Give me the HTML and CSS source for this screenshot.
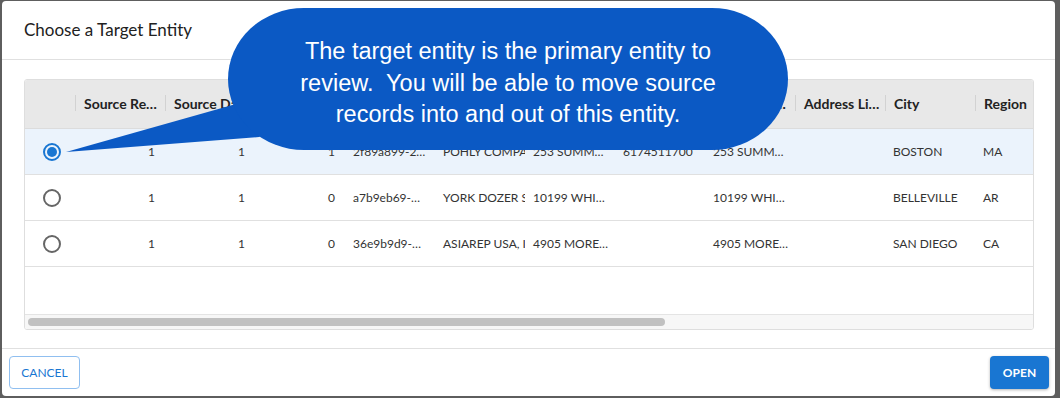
FILE: index.html
```html
<!DOCTYPE html>
<html lang="en">
<head>
    <meta charset="UTF-8">
    <title>Choose a Target Entity</title>
    <link rel="stylesheet" href="styles.css">
</head>
<body>
    <div class="dialog">
        <div class="dialog-header">
            <h2>Choose a Target Entity</h2>
        </div>

        <div class="dialog-content">
            <div class="grid">
                <div class="grid-body">
                    <div class="row header-row">
                        <div class="hcell first"></div>
                        <div class="hcell"><span>Source Re…</span></div>
                        <div class="hcell"><span>Source Da…</span></div>
                        <div class="hcell"><span>Ambiguous</span></div>
                        <div class="hcell"><span>Entity ID</span></div>
                        <div class="hcell"><span>Name</span></div>
                        <div class="hcell"><span>Address</span></div>
                        <div class="hcell"><span>Phone</span></div>
                        <div class="hcell"><span>Address L…</span></div>
                        <div class="hcell"><span>Address Li…</span></div>
                        <div class="hcell"><span>City</span></div>
                        <div class="hcell"><span>Region</span></div>
                        <div class="hcell"><span>Postal Code</span></div>
                    </div>

                    <div class="row selected">
                        <div class="cell radio-cell"><span class="radio checked"></span></div>
                        <div class="cell num">1</div>
                        <div class="cell num">1</div>
                        <div class="cell num">1</div>
                        <div class="cell">2f89a899-2…</div>
                        <div class="cell clip">POHLY COMPANY</div>
                        <div class="cell">253 SUMM…</div>
                        <div class="cell">6174511700</div>
                        <div class="cell">253 SUMM…</div>
                        <div class="cell"></div>
                        <div class="cell">BOSTON</div>
                        <div class="cell">MA</div>
                        <div class="cell">02210</div>
                    </div>

                    <div class="row">
                        <div class="cell radio-cell"><span class="radio"></span></div>
                        <div class="cell num">1</div>
                        <div class="cell num">1</div>
                        <div class="cell num">0</div>
                        <div class="cell">a7b9eb69-…</div>
                        <div class="cell clip">YORK DOZER SERVICE</div>
                        <div class="cell">10199 WHI…</div>
                        <div class="cell"></div>
                        <div class="cell">10199 WHI…</div>
                        <div class="cell"></div>
                        <div class="cell">BELLEVILLE</div>
                        <div class="cell">AR</div>
                        <div class="cell">72824</div>
                    </div>

                    <div class="row">
                        <div class="cell radio-cell"><span class="radio"></span></div>
                        <div class="cell num">1</div>
                        <div class="cell num">1</div>
                        <div class="cell num">0</div>
                        <div class="cell">36e9b9d9-…</div>
                        <div class="cell clip">ASIAREP USA, INC.</div>
                        <div class="cell">4905 MORE…</div>
                        <div class="cell"></div>
                        <div class="cell">4905 MORE…</div>
                        <div class="cell"></div>
                        <div class="cell">SAN DIEGO</div>
                        <div class="cell">CA</div>
                        <div class="cell">92121</div>
                    </div>
                </div>

                <div class="hscroll">
                    <div class="thumb"></div>
                </div>
            </div>
        </div>

        <div class="dialog-footer">
            <button class="btn btn-outline">CANCEL</button>
            <button class="btn btn-primary">OPEN</button>
        </div>
    </div>

    <!-- help callout over the dialog -->
    <svg class="callout-tail" width="320" height="170" viewBox="0 0 320 170">
        <polygon points="66,152 236,104 300,118 259,137" fill="#0b59c4"/>
    </svg>
    <div class="callout">
        <p>The target entity is the primary entity to<br>review.&nbsp; You will be able to move source<br>records into and out of this entity.</p>
    </div>
</body>
</html>
```

FILE: styles.css
```css
body {
    margin: 0;
    background-color: #5e5e5e;
    font-family: 'Lato', 'Liberation Sans', sans-serif;
    color: #222;
}

.dialog {
    position: relative;
    margin: 1px 0 0 2px;
    width: 1053px;
    height: 395px;
    background-color: #fff;
    border-radius: 4px;
    display: flex;
    flex-direction: column;
    overflow: hidden;
}

.dialog-header {
    height: 58px;
    border-bottom: 1px solid #e0e0e0;
    display: flex;
    align-items: center;
    padding-left: 22px;
    flex: none;
}

.dialog-header h2 {
    margin: 0 0 2px 0;
    font-size: 17px;
    font-weight: 400;
    color: #212121;
}

.dialog-content {
    padding: 19px 21px 18px 22px;
    flex: none;
}

.grid {
    height: 249px;
    border: 1px solid #dedede;
    border-radius: 3px;
    display: flex;
    flex-direction: column;
    overflow: hidden;
}

.grid-body {
    flex: 1;
    overflow: hidden;
}

.row {
    display: grid;
    grid-template-columns: 50px repeat(12, 90px);
    height: 45px;
    border-bottom: 1px solid #e0e0e0;
    width: max-content;
    min-width: 100%;
    font-size: 12px;
    color: #333;
}

.row.selected {
    background-color: #ebf3fc;
}

.header-row {
    height: 48px;
    background-color: #e8e8e8;
    border-bottom-color: #dcdcdc;
}

.hcell {
    display: flex;
    align-items: center;
    padding-bottom: 2px;
    font-size: 14px;
    font-weight: 700;
    color: #222;
    overflow: hidden;
    white-space: nowrap;
}

.hcell::before {
    content: "";
    flex: none;
    width: 1px;
    height: 16px;
    background-color: #d2d2d2;
    margin-right: 8px;
}

.hcell.first::before {
    display: none;
}

.cell {
    display: flex;
    align-items: center;
    padding: 0 10px 0 8px;
    white-space: nowrap;
    overflow: hidden;
}

.cell.num {
    justify-content: flex-end;
}

.cell.clip {
    padding-right: 0;
}

.radio-cell {
    padding-left: 18px;
}

.radio {
    width: 14px;
    height: 14px;
    border: 2px solid #666;
    border-radius: 50%;
    display: flex;
    align-items: center;
    justify-content: center;
}

.radio.checked {
    border-color: #1976d2;
}

.radio.checked::after {
    content: "";
    width: 10px;
    height: 10px;
    border-radius: 50%;
    background-color: #1976d2;
}

.hscroll {
    height: 14px;
    border-top: 1px solid #e4e4e4;
    background-color: #f7f7f7;
    display: flex;
    align-items: center;
    padding-left: 3px;
    flex: none;
}

.thumb {
    width: 637px;
    height: 8px;
    border-radius: 4px;
    background-color: #c1c1c1;
}

.dialog-footer {
    flex: 1;
    border-top: 1px solid #e0e0e0;
    display: flex;
    justify-content: space-between;
    align-items: flex-start;
    padding: 7px 6px 0 7px;
}

.btn {
    height: 33px;
    border-radius: 4px;
    font-family: 'Lato', 'Liberation Sans', sans-serif;
    font-size: 12px;
    cursor: pointer;
}

.btn-outline {
    width: 71px;
    background-color: #fff;
    color: #1976d2;
    border: 1px solid #90bff0;
}

.btn-primary {
    width: 59px;
    background-color: #1976d2;
    color: #fff;
    border: none;
    font-weight: 700;
    box-shadow: 0 1px 3px rgba(0, 0, 0, 0.3);
}

.callout-tail {
    position: absolute;
    left: 0;
    top: 0;
}

.callout {
    position: absolute;
    left: 228px;
    top: 8px;
    width: 560px;
    height: 142px;
    background-color: #0b59c4;
    border-radius: 76px / 71px;
    display: flex;
    align-items: center;
    justify-content: center;
}

.callout p {
    margin: 9px 0 0 0;
    font-family: 'Liberation Sans', Arial, sans-serif;
    font-size: 23.5px;
    line-height: 31.5px;
    color: #fff;
    text-align: center;
}
```
